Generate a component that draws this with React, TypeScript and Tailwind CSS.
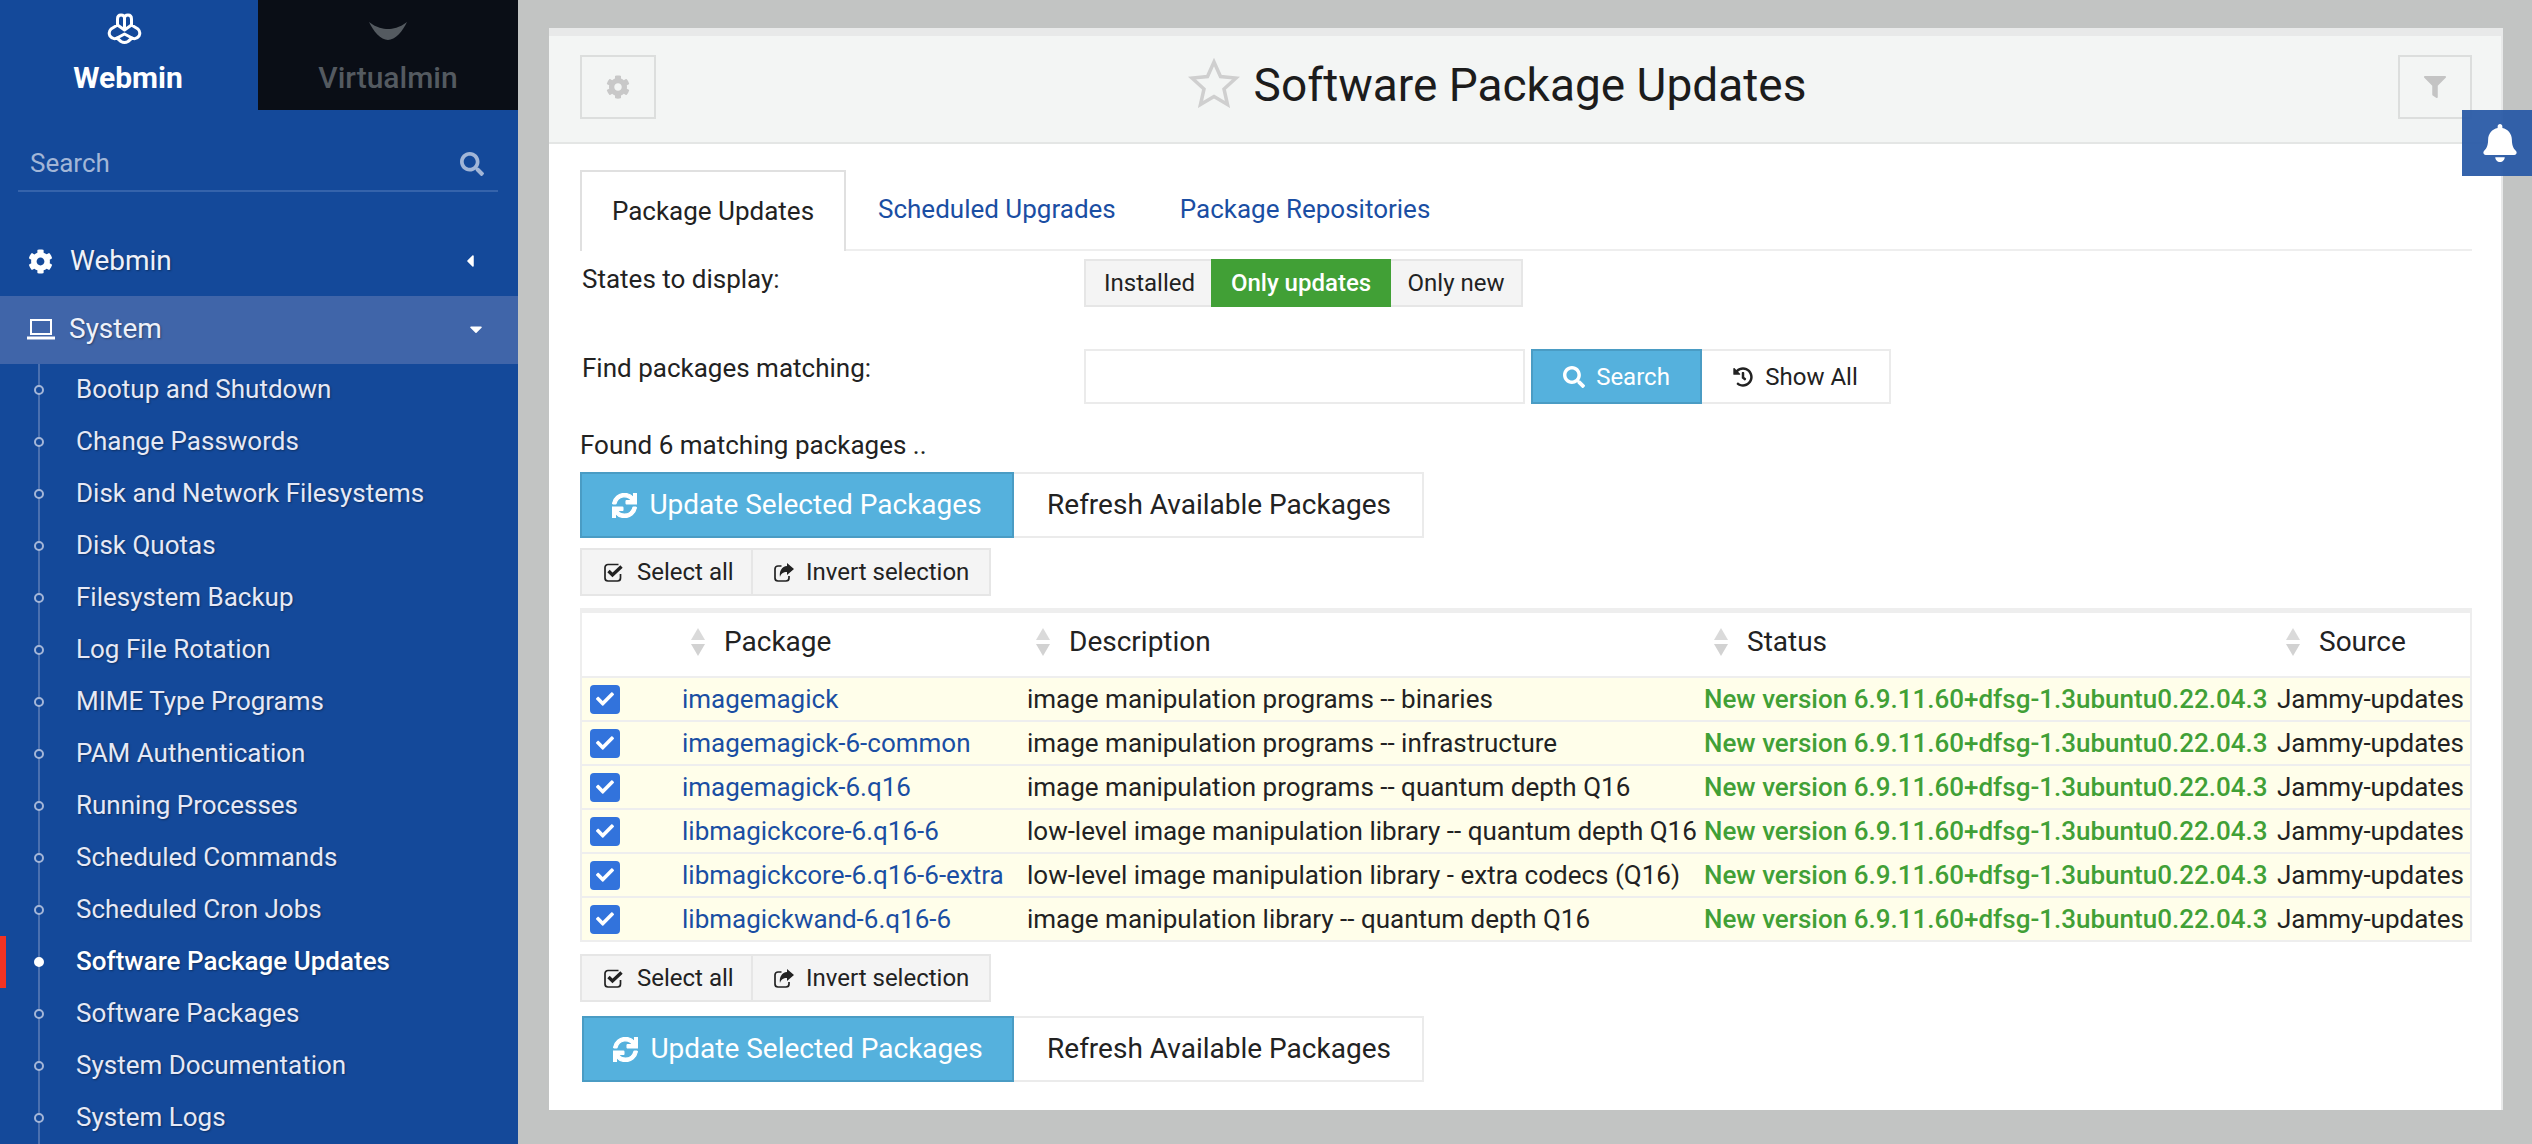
import React from "react";
import {
  FaBell,
  FaCaretDown,
  FaCaretLeft,
  FaCog,
  FaFilter,
  FaHistory,
  FaSearch,
  FaSync,
  FaCheck,
} from "react-icons/fa";

const menuItems = [
  "Bootup and Shutdown",
  "Change Passwords",
  "Disk and Network Filesystems",
  "Disk Quotas",
  "Filesystem Backup",
  "Log File Rotation",
  "MIME Type Programs",
  "PAM Authentication",
  "Running Processes",
  "Scheduled Commands",
  "Scheduled Cron Jobs",
  "Software Package Updates",
  "Software Packages",
  "System Documentation",
  "System Logs",
];

const packages = [
  ["imagemagick", "image manipulation programs -- binaries"],
  ["imagemagick-6-common", "image manipulation programs -- infrastructure"],
  ["imagemagick-6.q16", "image manipulation programs -- quantum depth Q16"],
  ["libmagickcore-6.q16-6", "low-level image manipulation library -- quantum depth Q16"],
  ["libmagickcore-6.q16-6-extra", "low-level image manipulation library - extra codecs (Q16)"],
  ["libmagickwand-6.q16-6", "image manipulation library -- quantum depth Q16"],
];

const WebminLogo = () => (
  <svg viewBox="0 0 35 32" className="h-[32px] w-[35px]" fill="none" stroke="white" strokeWidth="3" strokeLinejoin="round" strokeLinecap="round">
    <path d="M10.500 12 V6 Q10.500 2 14 2 Q17.500 2 17.500 5 Q17.500 2 21 2 Q24.500 2 24.500 6 V12 L31 16 Q34 19 32 23 Q29 27 25 25 L21 28.500 Q17.500 30.500 14 28.500 L10 25 Q6 27 3 23 Q1 19 4 16 Z" />
    <path d="M17.500 5 V14 M10.500 12 L17.500 17 L24.500 12 M10 25 L17.500 21 L25 25" />
  </svg>
);

const LaptopIcon = () => (
  <svg viewBox="0 0 28 22" className="h-[22px] w-[28px]" fill="none" stroke="white" strokeWidth="2">
    <rect x="4" y="2" width="20" height="14" />
    <path d="M0 20 H28" strokeWidth="3" />
  </svg>
);

const StarOutline = () => (
  <svg viewBox="0 0 52 50" className="mb-[4px] h-[50px] w-[52px]" fill="none" stroke="#cfcfcf" strokeWidth="3.500" strokeLinejoin="miter">
    <path d="M26 4 L32.500 18.500 L48 20 L36 31 L39.500 46.500 L26 38.500 L12.500 46.500 L16 31 L4 20 L19.500 18.500 Z" />
  </svg>
);

const CheckSquareIcon = () => (
  <svg viewBox="0 0 20 19" className="h-[19px] w-[20px]" fill="none" stroke="currentColor">
    <path d="M14.500 1.500 H4 a3 3 0 0 0 -3 3 V15 a3 3 0 0 0 3 3 H13.500 a3 3 0 0 0 3 -3 V11" strokeWidth="1.700" />
    <path d="M4.500 8 L8.500 12 L17.500 3.500" strokeWidth="3.400" />
  </svg>
);

const ShareSquareIcon = () => (
  <svg viewBox="0 0 20 19" className="h-[19px] w-[20px]" fill="none" stroke="currentColor">
    <path d="M7.500 3 H4 a3 3 0 0 0 -3 3 V15 a3 3 0 0 0 3 3 H12 a3 3 0 0 0 3 -3 V13" strokeWidth="1.700" />
    <path d="M13 0 L20 6 L13 12 V9 C9 9 7 10.500 6 14 C5 8 8 3.500 13 3 Z" fill="currentColor" stroke="none" />
  </svg>
);

const SortArrows = () => (
  <svg viewBox="0 0 16 28" className="h-[28px] w-[16px] shrink-0">
    <path d="M8 0 L15 12 H1 Z" fill="#dadada" />
    <path d="M1 16 H15 L8 28 Z" fill="#d2d2d2" />
  </svg>
);

const SelectButtons = () => (
  <div className="flex h-[48px] w-[411px] border-2 border-[#e6e6e6] bg-[#f4f4f4] text-[24px] text-[#222]">
    <div className="flex w-[171px] items-center gap-[13px] border-r-2 border-[#e6e6e6] pl-[22px]">
      <CheckSquareIcon />
      Select all
    </div>
    <div className="flex flex-1 items-center gap-[12px] pl-[21px]">
      <ShareSquareIcon />
      Invert selection
    </div>
  </div>
);

const ActionButtons = ({ offset }: { offset: string }) => (
  <div className={`flex h-[66px] text-[28px] ${offset}`}>
    <div className="flex flex-1 items-center justify-center gap-[12px] border-2 border-[#4a9cc4] bg-[#55b1dd] text-white">
      <FaSync className="h-[25px] w-[25px] stroke-current stroke-[24]" />
      Update Selected Packages
    </div>
    <div className="flex w-[410px] items-center justify-center border-2 border-l-0 border-[#ebebeb] bg-white pl-[2px] text-[#222]">
      Refresh Available Packages
    </div>
  </div>
);

const columns = "grid grid-cols-[100px_345px_677px_573px_1fr]";

export default function App() {
  return (
    <div className="relative flex h-[1144px] overflow-hidden bg-[#c2c4c3] font-['Roboto',sans-serif] text-[#222]">
      {/* Sidebar */}
      <aside className="w-[518px] shrink-0 bg-[#14499a] text-white">
        <div className="flex h-[110px]">
          <div className="flex w-[258px] flex-col items-center pt-[13px]">
            <span className="pr-[10px]"><WebminLogo /></span>
            <div className="mt-[16px] pr-[2px] text-[30px] font-bold leading-[34px]">Webmin</div>
          </div>
          <div className="flex flex-1 flex-col items-center bg-[#0a0e16] pt-[22px] text-[#545a60]">
            <svg viewBox="0 0 38 18" className="h-[18px] w-[38px]" fill="#545a60">
              <path d="M0 0 C8 6 14 7 19 7 C24 7 30 6 38 0 C34 9 26 18 19 18 C12 18 4 9 0 0 Z" />
            </svg>
            <div className="mt-[21px] text-[30px] font-medium leading-[34px]">Virtualmin</div>
          </div>
        </div>

        <div className="ml-[18px] mr-[20px] mt-[31px] flex h-[51px] items-center justify-between border-b-2 border-[#3563ab] pb-[4px] pl-[12px] pr-[14px] text-[26px] text-[#a2b6d7]">
          <span>Search</span>
          <FaSearch className="h-[24px] w-[24px]" />
        </div>

        <div className="mt-[36px] flex h-[68px] items-center pb-[2px] pl-[28px] pr-[38px] text-[28px] text-[#eef1fa] [text-shadow:1px_1px_2px_rgba(0,0,0,0.35)]">
          <FaCog className="mr-[17px] h-[25px] w-[25px] text-white" />
          <span className="flex-1">Webmin</span>
          <FaCaretLeft className="h-[20px] w-[20px] text-white" />
        </div>
        <div className="flex h-[68px] items-center bg-[#4065a9] pb-[2px] pl-[27px] pr-[32px] text-[28px] text-[#eef1fa] [text-shadow:1px_1px_2px_rgba(0,0,0,0.35)]">
          <span className="mr-[14px]"><LaptopIcon /></span>
          <span className="flex-1">System</span>
          <FaCaretDown className="h-[20px] w-[20px] text-white" />
        </div>

        <ul>
          {menuItems.map((item) => {
            const active = item === "Software Package Updates";
            return (
              <li
                key={item}
                className={`relative flex h-[52px] items-center pb-[1px] pl-[76px] text-[26px] [text-shadow:1px_1px_2px_rgba(0,0,0,0.35)] ${
                  active ? "font-medium text-white" : "text-[#e6e9f6]"
                }`}
              >
                {active && <span className="absolute left-0 top-0 h-full w-[6px] bg-[#f13323]" />}
                <span className="absolute left-[38px] top-0 h-full w-[2px] bg-[#4a70b0]" />
                <span
                  className={`absolute left-[34px] top-[21px] h-[10px] w-[10px] rounded-full border-2 ${
                    active ? "border-white bg-white" : "border-[#a4b6d8] bg-[#14499a]"
                  }`}
                />
                {item}
              </li>
            );
          })}
        </ul>
      </aside>

      {/* Main panel */}
      <main className="flex-1 pl-[31px] pr-[29px] pt-[28px]">
        <div className="h-[1082px] border-t-[8px] border-r-[2px] border-[#e8e9e9] bg-white">
          <div className="flex h-[108px] items-start justify-between border-b-2 border-[#e4e6e5] bg-[#f3f5f4] pl-[31px] pr-[29px] pt-[19px]">
            <div className="flex h-[64px] w-[76px] items-center justify-center border-2 border-[#dcdedd] text-[#c8c8c8]">
              <FaCog className="h-[24px] w-[24px]" />
            </div>
            <div className="-mt-[2px] mr-[60px] flex items-center gap-[14px] text-[46px] leading-[64px] text-[#1c1c1c]">
              <StarOutline />
              Software Package Updates
            </div>
            <div className="flex h-[64px] w-[74px] items-center justify-center border-2 border-[#dcdedd] text-[#c4c4c4]">
              <FaFilter className="h-[22px] w-[22px]" />
            </div>
          </div>

          <div className="pl-[31px] pr-[29px] pt-[26px]">
            {/* Tabs */}
            <div className="flex h-[81px] border-b-2 border-[#eeeeee] text-[26px]">
              <div className="flex h-[81px] w-[266px] items-center justify-center border-x-2 border-t-2 border-[#e0e0e0] bg-white">
                Package Updates
              </div>
              <div className="ml-[32px] flex items-center text-[#1a4ea3]">Scheduled Upgrades</div>
              <div className="ml-[64px] flex items-center text-[#1a4ea3]">Package Repositories</div>
            </div>

            {/* Filters */}
            <div className="mt-[8px] flex h-[48px] text-[26px]">
              <div className="w-[504px] pl-[2px] pt-[3px] leading-[34px]">States to display:</div>
              <div className="flex border-2 border-[#e6e6e6] bg-[#f4f4f4] text-[24px]">
                <div className="flex w-[125px] items-center justify-center pl-[2px]">Installed</div>
                <div className="-my-[2px] flex w-[180px] items-center justify-center bg-[#41a036] font-medium text-white">
                  Only updates
                </div>
                <div className="flex w-[130px] items-center justify-center">Only new</div>
              </div>
            </div>

            <div className="mt-[42px] flex h-[55px] text-[26px]">
              <div className="w-[504px] pl-[2px] leading-[38px]">Find packages matching:</div>
              <div className="w-[441px] border-2 border-[#ebebeb] bg-white" />
              <div className="ml-[6px] flex w-[171px] items-center justify-center gap-[11px] border-2 border-[#4a9cc4] bg-[#55b1dd] text-[24px] text-white">
                <FaSearch className="h-[22px] w-[22px]" />
                Search
              </div>
              <div className="flex w-[189px] items-center justify-center gap-[12px] border-2 border-l-0 border-[#ebebeb] text-[24px]">
                <FaHistory className="h-[20px] w-[20px]" />
                Show All
              </div>
            </div>

            <div className="mt-[25px] h-[33px] text-[26px] leading-[33px]">Found 6 matching packages ..</div>

            <div className="mt-[10px] w-[844px]">
              <ActionButtons offset="" />
            </div>
            <div className="mt-[10px]">
              <SelectButtons />
            </div>

            {/* Table */}
            <div className="mt-[12px] w-[1892px] border-x-2 border-t-[5px] border-[#eeeeee]">
              <div className={`${columns} h-[65px] items-center border-b-2 border-[#eeeeee] pb-[5px] text-[28px]`}>
                <div />
                <div className="flex items-center gap-[18px] pl-[8px]"><SortArrows />Package</div>
                <div className="flex items-center gap-[18px] pl-[8px]"><SortArrows />Description</div>
                <div className="flex items-center gap-[18px] pl-[9px]"><SortArrows />Status</div>
                <div className="flex items-center gap-[18px] pl-[8px]"><SortArrows />Source</div>
              </div>
              {packages.map(([name, description]) => (
                <div
                  key={name}
                  className={`${columns} h-[44px] items-center border-b-2 border-[#eeeeee] bg-[#fffeea] text-[26px]`}
                >
                  <div className="pl-[8px]">
                    <span className="flex h-[29px] w-[30px] items-center justify-center rounded-[4px] bg-[#3273dc] text-white">
                      <FaCheck className="h-[18px] w-[18px]" />
                    </span>
                  </div>
                  <div className="text-[#1a4ea3]">{name}</div>
                  <div>{description}</div>
                  <div className="font-medium text-[#41a036]">New version 6.9.11.60+dfsg-1.3ubuntu0.22.04.3</div>
                  <div>Jammy-updates</div>
                </div>
              ))}
            </div>

            <div className="mt-[12px]">
              <SelectButtons />
            </div>
            <div className="mt-[14px] w-[844px]">
              <ActionButtons offset="ml-[2px]" />
            </div>
          </div>
        </div>
      </main>

      {/* Notification toggle */}
      <div className="absolute right-0 top-[110px] flex h-[66px] w-[70px] items-center justify-center bg-[#2a5ba6]/95 pl-[6px] text-white">
        <FaBell className="h-[38px] w-[36px]" />
      </div>
    </div>
  );
}
